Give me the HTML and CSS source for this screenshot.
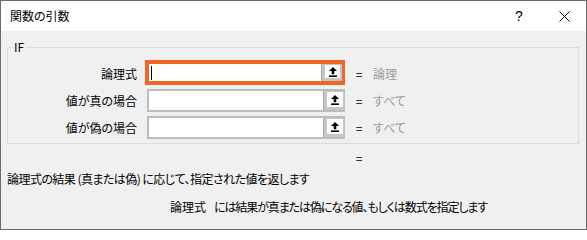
FILE: index.html
```html
<!DOCTYPE html>
<html lang="ja">
<head>
<meta charset="utf-8">
<title>関数の引数</title>
<link rel="stylesheet" href="styles.css">
</head>
<body>
<div class="window">
  <div class="titlebar">
    <span class="title">関数の引数</span>
    <div class="tb-btns">
      <span class="tb-btn help">?</span>
      <span class="tb-btn close">
        <svg width="11" height="11" viewBox="0 0 11 11"><path d="M0.5 0.5 L10.5 10.5 M10.5 0.5 L0.5 10.5" stroke="#000" stroke-width="1" fill="none"/></svg>
      </span>
    </div>
  </div>
  <div class="body">
    <div class="group">
      <span class="legend">IF</span>
      <div class="rows">
        <div class="row">
          <span class="label">論理式</span>
          <div class="field focus">
            <span class="caret"></span>
            <span class="ref-btn"><span class="btn-face"><svg width="8" height="10" viewBox="0 0 8 10"><path d="M4 0 L8 4 L5.3 4 L5.3 7.3 L2.7 7.3 L2.7 4 L0 4 Z" fill="#000"/><rect x="0" y="8.4" width="8" height="1.6" fill="#000"/></svg></span></span>
          </div>
          <span class="eq">=</span>
          <span class="result">論理</span>
        </div>
        <div class="row">
          <span class="label">値が真の場合</span>
          <div class="field">
            <span class="spacer"></span>
            <span class="ref-btn"><span class="btn-face"><svg width="8" height="10" viewBox="0 0 8 10"><path d="M4 0 L8 4 L5.3 4 L5.3 7.3 L2.7 7.3 L2.7 4 L0 4 Z" fill="#000"/><rect x="0" y="8.4" width="8" height="1.6" fill="#000"/></svg></span></span>
          </div>
          <span class="eq">=</span>
          <span class="result">すべて</span>
        </div>
        <div class="row">
          <span class="label">値が偽の場合</span>
          <div class="field">
            <span class="spacer"></span>
            <span class="ref-btn"><span class="btn-face"><svg width="8" height="10" viewBox="0 0 8 10"><path d="M4 0 L8 4 L5.3 4 L5.3 7.3 L2.7 7.3 L2.7 4 L0 4 Z" fill="#000"/><rect x="0" y="8.4" width="8" height="1.6" fill="#000"/></svg></span></span>
          </div>
          <span class="eq">=</span>
          <span class="result">すべて</span>
        </div>
      </div>
    </div>
    <div class="total"><span class="eq">=</span></div>
    <div class="desc">論理式の結果 (真または偽) に応じて、指定された値を返します</div>
    <div class="arg-desc">
      <span class="arg-name">論理式</span>
      <span class="arg-text">には結果が真または偽になる値、もしくは数式を指定します</span>
    </div>
  </div>
</div>
</body>
</html>
```
FILE: styles.css
```css
* { box-sizing: border-box; }
html, body { margin: 0; padding: 0; }
body {
  font-family: "Noto Sans CJK JP", sans-serif;
  font-size: 12px;
  color: #000;
  font-feature-settings: "palt";
}
.window {
  width: 587px;
  height: 230px;
  border: 1px solid #6a6a6a;
  background: #f0f0f0;
  display: flex;
  flex-direction: column;
}
.titlebar {
  height: 30px;
  background: #fff;
  display: flex;
  align-items: center;
  flex-shrink: 0;
}
.title { padding-left: 9px; line-height: 16px; }
.tb-btns { margin-left: auto; display: flex; height: 100%; }
.tb-btn {
  width: 46px;
  display: flex;
  align-items: center;
  justify-content: center;
}
.help { font-family: "Liberation Sans", sans-serif; font-size: 14px; }
.close { width: 44px; }
.body { flex: 1; }
.group {
  position: relative;
  margin: 16px 7px 0 6px;
  height: 97px;
  border: 1px solid #dcdcdc;
  padding-top: 14px;
}
.legend {
  position: absolute;
  left: 4px;
  top: -9px;
  padding: 0 2px;
  background: #f0f0f0;
  line-height: 16px;
}
.rows { display: flex; flex-direction: column; gap: 4px; }
.row {
  display: grid;
  grid-template-columns: 139px 198px 28px 1fr;
  align-items: center;
  height: 23px;
}
.label { text-align: right; padding-right: 10px; line-height: 16px; }
.field {
  height: 23px;
  background: #fff;
  border: 2px solid #bcbcbc;
  border-right: none;
  display: flex;
  align-items: stretch;
}
.field.focus {
  align-self: start;
  margin: -2px 0 0 -2px;
  width: 200px;
  height: 25px;
  border: 4px solid #f26522;
  border-right-width: 3px;
}
.caret { width: 1px; height: 14px; background: #000; margin: 1px 0 0 2px; align-self: center; }
.spacer { flex: 1; }
.ref-btn {
  margin-left: auto;
  width: 22px;
  background: #c6c6c6;
  border-left: 1px solid #a9a9a9;
  padding: 1px 2px 3px 3px;
  display: flex;
}
.field.focus .ref-btn { width: 21px; }
.btn-face {
  flex: 1;
  background: #fff;
  display: flex;
  align-items: center;
  justify-content: center;
}
.eq { text-align: center; line-height: 16px; }
.result { color: #9c9c9c; line-height: 16px; }
.total {
  margin-top: 6px;
  padding-left: 344px;
  display: flex;
}
.total .eq { width: 28px; }
.desc { margin-top: 5px; padding-left: 6px; line-height: 16px; letter-spacing: -0.55px; }
.arg-desc {
  margin-top: 12px;
  padding-left: 169px;
  display: flex;
  gap: 8px;
  line-height: 16px;
}
.arg-text { letter-spacing: -1.1px; }
```
